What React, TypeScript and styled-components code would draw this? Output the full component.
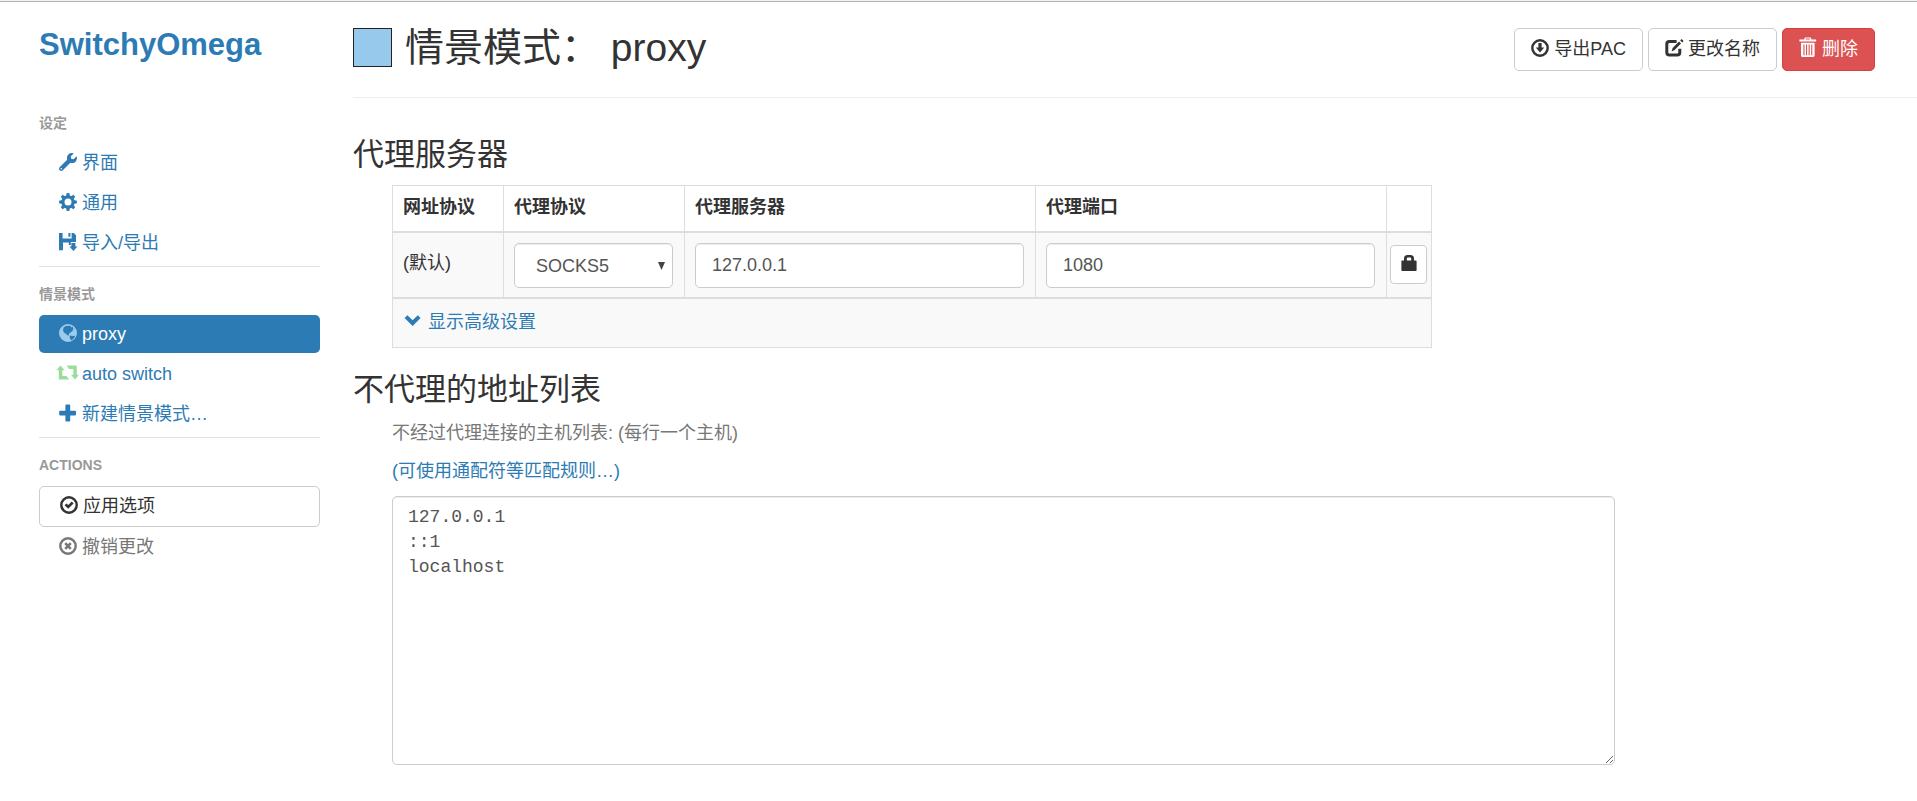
import React from "react";
import styled, { createGlobalStyle, css } from "styled-components";
import { FaWrench } from "react-icons/fa";

const LINK = "#2d7bb4";
const SANS = `"Liberation Sans", "Noto Sans CJK SC", sans-serif`;
const MONO = `"Liberation Mono", "Noto Sans CJK SC", monospace`;

const GlobalStyle = createGlobalStyle`
  *, *::before, *::after { box-sizing: border-box; }
  body {
    margin: 0;
    background: #fff;
    color: #333;
    font-family: ${SANS};
    font-size: 18px;
    line-height: 26px;
  }
  a { color: ${LINK}; text-decoration: none; }
  button, input, select, textarea { font: inherit; color: inherit; margin: 0; }
`;

/* ---------- icons ---------- */

const Glyph = styled.svg`
  width: 18px;
  height: 18px;
  flex: none;
  display: block;
  margin-bottom: 2px;
  fill: currentColor;
  overflow: visible;
`;

const Icon = ({ children }: { children: React.ReactNode }) => (
  <Glyph viewBox="0 0 18 18" aria-hidden="true">
    {children}
  </Glyph>
);

const WrenchIcon = () => <Glyph as={FaWrench} aria-hidden="true" />;

const CogIcon = () => (
  <Icon>
    <circle cx="9" cy="9" r="5.1" fill="none" stroke="currentColor" strokeWidth="3.2" />
    {[0, 45, 90, 135, 180, 225, 270, 315].map((a) => (
      <path key={a} d="M7.100 3.2 7.700.1h2.600l.6 3.100z" transform={`rotate(${a} 9 9)`} />
    ))}
  </Icon>
);

const FloppyIcon = () => (
  <Icon>
    <path
      fillRule="evenodd"
      d="M0 0h3.6v5.6h9V0h2.2L17 2.3v6.8h-5.2v3h-2V9.6H4v7.6H0zM9.4 0h2v3.8h-2z"
    />
    <path d="M12.4 10h4v3.6h2L14.4 18l-4-4.4h2z" />
  </Icon>
);

const GlobeIcon = () => (
  <Icon>
    <path
      fillRule="evenodd"
      d="M9 0a9 9 0 1 1 0 18A9 9 0 0 1 9 0zM6.8 2 4.6 3.4 4 6l.8 2.6 2 1.2 1.6 1.4 1.6.4-.2-1.6 1.4-1.2 2.2-1.8 1-2-.6-2.2-1.6.4-1-1.4zM11 11.6l-.4 1.8 1.6 3 2.6-1.8 1.4-2.8-2.4.2z"
    />
  </Icon>
);

const RetweetIcon = () => (
  <Icon>
    <path d="M1.500 1.500 5.500 6.200H3.300V12h4l3 3.400H.4q-.6 0-.6-.6V6.200h-2.300z" />
    <path d="M7.600 1.600h9.600q.6 0 .6.6v8.600H20l-4 4.700-4-4.700h2.300V5h-4z" />
  </Icon>
);

const PlusIcon = () => (
  <Icon>
    <path d="M7.2.6h3.2q.8 0 .8.8v5.4h5q.8 0 .8.8v3q0 .8-.8.8h-5v5.4q0 .8-.8.8H7.2q-.8 0-.8-.8v-5.4H1q-.8 0-.8-.8v-3q0-.8.8-.8h5.4V1.4q0-.8.8-.8z" />
  </Icon>
);

const Ring = () => <circle cx="9" cy="9" r="7.700" fill="none" stroke="currentColor" strokeWidth="2.400" />;

const OkCircleIcon = () => (
  <Icon>
    <Ring />
    <path d="M4.6 9.2 6.4 7.4l1.8 1.7 3.6-3.5 1.8 1.8-5.4 5.4z" />
  </Icon>
);

const RemoveCircleIcon = () => (
  <Icon>
    <Ring />
    <path d="m6.2 6.2 5.6 5.6m0-5.6-5.6 5.6" fill="none" stroke="currentColor" strokeWidth="2.6" />
  </Icon>
);

const DownloadIcon = () => (
  <Icon>
    <Ring />
    <path d="M7.4 4h3.2v4.6h2.6L9 13.6 4.8 8.6h2.6z" />
  </Icon>
);

const EditIcon = () => (
  <Icon>
    <path
      d="M11.600 2.600H4.400q-2.600 0-2.600 2.600v8.200q0 2.600 2.600 2.600h7.800q2.600 0 2.600-2.600V9.800"
      fill="none"
      stroke="currentColor"
      strokeWidth="3"
    />
    <path d="m6.600 12.400 1-3.400 6.400-6.400 2 2-6.400 6.400zM15.200 1.400 16.600 0 18.600 2l-1.400 1.400z" />
  </Icon>
);

const TrashIcon = () => (
  <Icon>
    <path
      fillRule="evenodd"
      d="M6-1.600h5.600l1 2h4.600v2H.4v-2H5zM6.600.4h4.400L10.600-.4H7zM2 3.800h13.600v12.800q0 1.400-1.400 1.400H3.400Q2 18 2 16.600zM4.400 5.400v10.800h1.100V5.400zM7 5.400v10.800h1.100V5.400zM9.600 5.400v10.800h1.100V5.400zM12.200 5.400v10.800h1.100V5.400z"
    />
  </Icon>
);

const LockIcon = () => (
  <Icon>
    <path
      fillRule="evenodd"
      d="M4 6.400V4.600Q4 1 7.600 1h2.800Q14 1 14 4.600v1.800h1.800q.8 0 .8.8v9q0 .8-.8.8H2.200q-.8 0-.8-.8v-9q0-.8.8-.8zM6.800 6.400h4.400V4.600q0-1-1-1H7.800q-1 0-1 1z"
    />
  </Icon>
);

const ChevronDownIcon = () => (
  <Icon>
    <path d="M1.600 6 4.400 3.200l5.200 5 5.200-5L17.600 6l-8 8z" />
  </Icon>
);

/* ---------- page frame ---------- */

const Page = styled.div`
  display: flex;
  align-items: flex-start;
  padding-top: 26px;
  padding-bottom: 35px;
  min-height: 100vh;
  background: linear-gradient(#f2f2f2 0 1px, #b4b4b4 1px 2px, #fff 2px);
`;

const Sidebar = styled.nav`
  flex: none;
  width: 353px;
  padding: 1px 33px 0 39px;
`;

const Main = styled.main`
  flex: 1;
  min-width: 0;
`;

/* ---------- sidebar ---------- */

const Brand = styled.h1`
  margin: 0 0 51px;
  font-size: 31px;
  line-height: 36px;
  font-weight: 700;
`;

const GroupTitle = styled.h2`
  margin: 0 0 12px;
  font-size: 14px;
  line-height: 18px;
  font-weight: 700;
  color: #999;
  text-transform: uppercase;
`;

const Menu = styled.ul`
  list-style: none;
  margin: 0;
  padding: 0;
  display: flex;
  flex-direction: column;
  gap: 2px;
`;

const Divider = styled.hr`
  margin: 4px 0 18px;
  border: 0;
  border-top: 1px solid #e1e1e1;
`;

const menuRow = css`
  display: flex;
  align-items: center;
  gap: 5px;
  width: 100%;
  height: 38px;
  padding: 0 20px;
  border-radius: 5px;
`;

const MenuLink = styled.a<{ $active?: boolean }>`
  ${menuRow}
  background: ${(p) => (p.$active ? LINK : "transparent")};
  color: ${(p) => (p.$active ? "#fff" : LINK)};
`;

const MenuButton = styled.button<{ $outlined?: boolean }>`
  ${menuRow}
  height: ${(p) => (p.$outlined ? 41 : 38)}px;
  padding-bottom: 2px;
  border: ${(p) => (p.$outlined ? "1px solid #ccc" : "0")};
  background: ${(p) => (p.$outlined ? "#fff" : "transparent")};
  color: ${(p) => (p.$outlined ? "#333" : "#777")};
`;

const Tint = styled.span<{ $color: string }>`
  display: block;
  color: ${(p) => p.$color};
`;

/* ---------- header ---------- */

const Header = styled.header`
  display: flex;
  justify-content: space-between;
  align-items: flex-start;
  height: 72px;
  padding: 2px 42px 0 0;
  border-bottom: 1px solid #eee;
`;

const Title = styled.div`
  display: flex;
  gap: 13px;
`;

const Swatch = styled.input`
  appearance: none;
  width: 39px;
  height: 39px;
  padding: 0;
  border: 1px solid #222;
  background: none;
  &::-webkit-color-swatch-wrapper { padding: 0; }
  &::-webkit-color-swatch { border: 0; border-radius: 0; }
`;

const ProfileName = styled.h2`
  margin: 0;
  font-size: 39px;
  line-height: 40px;
  font-weight: 400;
`;

const Toolbar = styled.div`
  display: flex;
  gap: 5px;
`;

const Button = styled.button<{ $danger?: boolean }>`
  display: flex;
  align-items: center;
  gap: 5px;
  height: 43px;
  padding: 0 16px 2px;
  border: 1px solid ${(p) => (p.$danger ? "#d63f3f" : "#ccc")};
  border-radius: 5px;
  background: ${(p) => (p.$danger ? "#dc5151" : "#fff")};
  color: ${(p) => (p.$danger ? "#fff" : "#333")};
`;

/* ---------- sections ---------- */

const SectionTitle = styled.h3`
  margin: 0 0 13px;
  font-size: 31px;
  line-height: 34px;
  font-weight: 400;
`;

const ProxySection = styled.section`
  padding-top: 40px;
`;

const BypassSection = styled.section`
  padding-top: 25px;
`;

const Indented = styled.div`
  padding-left: 39px;
`;

const Table = styled.table`
  width: 100%;
  max-width: 1040px;
  table-layout: fixed;
  border-spacing: 0;
  border: solid #ddd;
  border-width: 1px 0 0 1px;
`;

const Col = styled.col<{ $width?: number }>`
  width: ${(p) => (p.$width ? `${p.$width}px` : "auto")};
`;

const HeadCell = styled.th`
  padding: 8px 10px 11px;
  border: solid #ddd;
  border-width: 0 1px 2px 0;
  text-align: left;
  font-weight: 700;
`;

const cellPadding = {
  field: "10px 11px 9px 10px",
  text: "8px 10px 12px",
  action: "0 3px 2px",
  footer: "0 10px 1px",
};

const Cell = styled.td<{ $kind: keyof typeof cellPadding }>`
  height: ${(p) => (p.$kind === "footer" ? 49 : 66)}px;
  padding: ${(p) => cellPadding[p.$kind]};
  border: solid #ddd;
  border-width: 0 1px ${(p) => (p.$kind === "footer" ? 1 : 2)}px 0;
  background: #f9f9f9;
  vertical-align: middle;
`;

const field = css`
  display: block;
  width: 100%;
  border: 1px solid #ccc;
  border-radius: 5px;
  background: #fff;
  color: #555;
  box-shadow: inset 0 1px 1px rgba(0, 0, 0, 0.075);
`;

const TextField = styled.input`
  ${field}
  height: 45px;
  padding: 0 16px;
`;

const SelectWrap = styled.div`
  display: grid;
  align-items: center;
  & > * { grid-area: 1 / 1; }
  & > svg { justify-self: end; margin-right: 8px; pointer-events: none; }
`;

const Select = styled.select`
  ${field}
  appearance: none;
  height: 45px;
  padding: 0 21px;
`;

const Caret = styled.svg`
  width: 7px;
  height: 8px;
  fill: #444;
`;

const LockButton = styled.button`
  display: flex;
  align-items: center;
  justify-content: center;
  width: 37px;
  height: 39px;
  padding: 0;
  border: 1px solid #ccc;
  border-radius: 4px;
  background: #fff;
`;

const InlineLink = styled.a`
  display: inline-flex;
  align-items: center;
  gap: 7px;
`;

const Help = styled.p<{ $muted?: boolean }>`
  margin: 0 0 12px;
  color: ${(p) => (p.$muted ? "#777" : "inherit")};
`;

const HostList = styled.textarea`
  ${field}
  max-width: 1223px;
  height: 269px;
  padding: 8px 15px;
  font-family: ${MONO};
  line-height: 25px;
  resize: vertical;
`;

export default function App() {
  return (
    <>
      <GlobalStyle />
      <Page>
        <Sidebar>
          <Brand><a href="#about">SwitchyOmega</a></Brand>

          <GroupTitle>设定</GroupTitle>
          <Menu>
            <li><MenuLink href="#ui"><WrenchIcon />界面</MenuLink></li>
            <li><MenuLink href="#general"><CogIcon />通用</MenuLink></li>
            <li><MenuLink href="#io"><FloppyIcon />导入/导出</MenuLink></li>
          </Menu>
          <Divider />

          <GroupTitle>情景模式</GroupTitle>
          <Menu>
            <li>
              <MenuLink href="#profile-proxy" $active>
                <Tint $color="#99ccee"><GlobeIcon /></Tint>proxy
              </MenuLink>
            </li>
            <li>
              <MenuLink href="#profile-auto">
                <Tint $color="#99dd99"><RetweetIcon /></Tint>auto switch
              </MenuLink>
            </li>
            <li><MenuLink href="#new"><PlusIcon />新建情景模式…</MenuLink></li>
          </Menu>
          <Divider />

          <GroupTitle>Actions</GroupTitle>
          <Menu>
            <li><MenuButton type="button" $outlined><OkCircleIcon />应用选项</MenuButton></li>
            <li><MenuButton type="button"><RemoveCircleIcon />撤销更改</MenuButton></li>
          </Menu>
        </Sidebar>

        <Main>
          <Header>
            <Title>
              <Swatch type="color" defaultValue="#96c9ec" aria-label="颜色" />
              <ProfileName>情景模式： proxy</ProfileName>
            </Title>
            <Toolbar>
              <Button type="button"><DownloadIcon />导出PAC</Button>
              <Button type="button"><EditIcon />更改名称</Button>
              <Button type="button" $danger><TrashIcon />删除</Button>
            </Toolbar>
          </Header>

          <ProxySection>
            <SectionTitle>代理服务器</SectionTitle>
            <Indented>
              <Table>
                <colgroup>
                  <Col $width={111} />
                  <Col $width={181} />
                  <Col />
                  <Col />
                  <Col $width={45} />
                </colgroup>
                <thead>
                  <tr>
                    <HeadCell scope="col">网址协议</HeadCell>
                    <HeadCell scope="col">代理协议</HeadCell>
                    <HeadCell scope="col">代理服务器</HeadCell>
                    <HeadCell scope="col">代理端口</HeadCell>
                    <HeadCell />
                  </tr>
                </thead>
                <tbody>
                  <tr>
                    <Cell $kind="text">(默认)</Cell>
                    <Cell $kind="field">
                      <SelectWrap>
                        <Select aria-label="代理协议" defaultValue="SOCKS5">
                          <option>HTTP</option>
                          <option>HTTPS</option>
                          <option>SOCKS4</option>
                          <option>SOCKS5</option>
                        </Select>
                        <Caret viewBox="0 0 7 8" aria-hidden="true"><path d="M0 0h7L3.5 8z" /></Caret>
                      </SelectWrap>
                    </Cell>
                    <Cell $kind="field">
                      <TextField type="text" aria-label="代理服务器" defaultValue="127.0.0.1" />
                    </Cell>
                    <Cell $kind="field">
                      <TextField type="text" inputMode="numeric" aria-label="代理端口" defaultValue="1080" />
                    </Cell>
                    <Cell $kind="action">
                      <LockButton type="button" aria-label="代理登录"><LockIcon /></LockButton>
                    </Cell>
                  </tr>
                  <tr>
                    <Cell colSpan={5} $kind="footer">
                      <InlineLink href="#advanced"><ChevronDownIcon />显示高级设置</InlineLink>
                    </Cell>
                  </tr>
                </tbody>
              </Table>
            </Indented>
          </ProxySection>

          <BypassSection>
            <SectionTitle>不代理的地址列表</SectionTitle>
            <Indented>
              <Help $muted>不经过代理连接的主机列表: (每行一个主机)</Help>
              <Help><a href="#conditions">(可使用通配符等匹配规则…)</a></Help>
              <HostList
                aria-label="不代理的地址列表"
                spellCheck={false}
                defaultValue={"127.0.0.1\n::1\nlocalhost"}
              />
            </Indented>
          </BypassSection>
        </Main>
      </Page>
    </>
  );
}
